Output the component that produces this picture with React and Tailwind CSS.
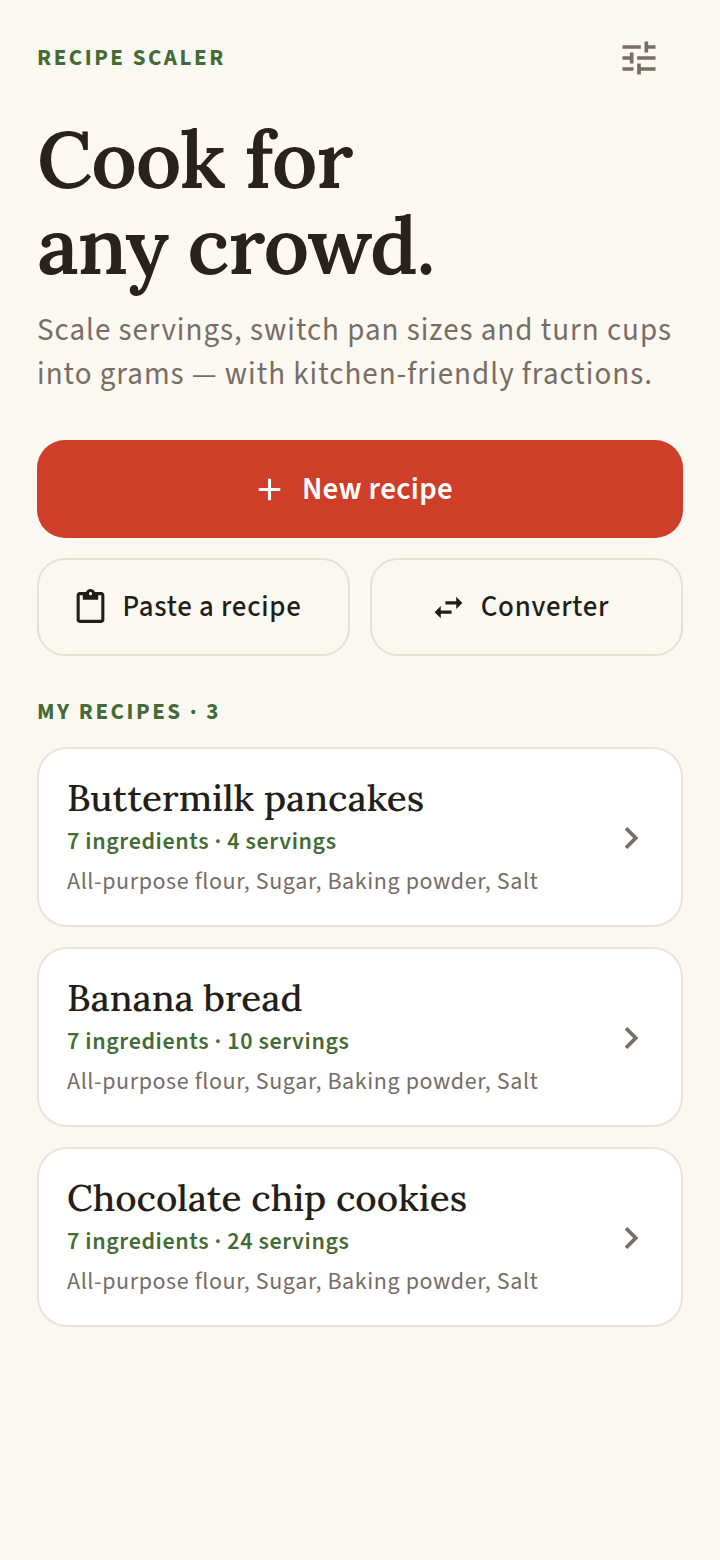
import {
  MdAdd,
  MdChevronRight,
  MdContentPaste,
  MdSwapHoriz,
  MdTune,
} from "react-icons/md";

const recipes = [
  {
    name: "Buttermilk pancakes",
    ingredients: 7,
    servings: 4,
    preview: "All-purpose flour, Sugar, Baking powder, Salt",
  },
  {
    name: "Banana bread",
    ingredients: 7,
    servings: 10,
    preview: "All-purpose flour, Sugar, Baking powder, Salt",
  },
  {
    name: "Chocolate chip cookies",
    ingredients: 7,
    servings: 24,
    preview: "All-purpose flour, Sugar, Baking powder, Salt",
  },
];

function SecondaryButton({ icon: Icon, children }) {
  return (
    <button
      type="button"
      className="flex h-[98px] items-center justify-center gap-3.5 rounded-[28px] border-2 border-[#e6e1d3] pr-3.5 text-[29px] leading-9 font-medium tracking-wide text-[#211d19]"
    >
      <Icon className="size-[37px] shrink-0" aria-hidden="true" />
      {children}
    </button>
  );
}

function RecipeCard({ recipe }) {
  return (
    <a
      href="#"
      className="flex items-center justify-between rounded-[30px] border-2 border-[#ebe3d7] bg-white px-7 pt-[25px] pb-[23px]"
    >
      <div className="min-w-0">
        <h3 className="font-['Lora','Liberation_Serif',serif] text-[37px] leading-[48px] font-medium text-[#241e1a]">
          {recipe.name}
        </h3>
        <p className="text-2xl leading-10 font-semibold tracking-wide text-[#436b35]">
          {recipe.ingredients} ingredients · {recipe.servings} servings
        </p>
        <p className="text-2xl leading-10 tracking-wide text-[#776d65]">{recipe.preview}</p>
      </div>
      <MdChevronRight className="size-11 shrink-0 text-[#776d65]" aria-hidden="true" />
    </a>
  );
}

export default function App() {
  return (
    <div className="min-h-screen bg-[#fbf8f1] px-[37px] py-9 font-['Source_Sans_3','Noto_Sans_CJK_SC',sans-serif]">
      <header className="flex items-center justify-between pr-[22px]">
        <p className="text-[23px] leading-7 font-bold tracking-[0.11em] text-[#436b35]">RECIPE SCALER</p>
        <button type="button" aria-label="Settings" className="text-[#776d65]">
          <MdTune className="size-11" aria-hidden="true" />
        </button>
      </header>

      <main>
        <h1 className="mt-9 font-['Lora','Liberation_Serif',serif] text-[80px] leading-[86px] font-semibold tracking-[-0.015em] text-[#29211b]">
          Cook for
          <br />
          any crowd.
        </h1>
        <p className="mt-5 text-[31px] leading-11 tracking-[1px] text-[#776d65]">
          Scale servings, switch pan sizes and turn cups into grams — with kitchen-friendly fractions.
        </p>

        <button
          type="button"
          className="mt-11 flex h-[98px] w-full items-center justify-center gap-3.5 rounded-[28px] bg-[#cf3e29] pr-4 text-[31px] leading-9 font-semibold tracking-[0.01em] text-white"
        >
          <MdAdd className="size-[37px] shrink-0" aria-hidden="true" />
          New recipe
        </button>
        <div className="mt-5 grid grid-cols-2 gap-5">
          <SecondaryButton icon={MdContentPaste}>Paste a recipe</SecondaryButton>
          <SecondaryButton icon={MdSwapHoriz}>Converter</SecondaryButton>
        </div>

        <section>
          <h2 className="mt-[42px] text-[23px] leading-7 font-bold tracking-[0.11em] text-[#436b35]">
            MY RECIPES · {recipes.length}
          </h2>
          <div className="mt-[21px] flex flex-col gap-5">
            {recipes.map((recipe) => (
              <RecipeCard key={recipe.name} recipe={recipe} />
            ))}
          </div>
        </section>
      </main>
    </div>
  );
}
